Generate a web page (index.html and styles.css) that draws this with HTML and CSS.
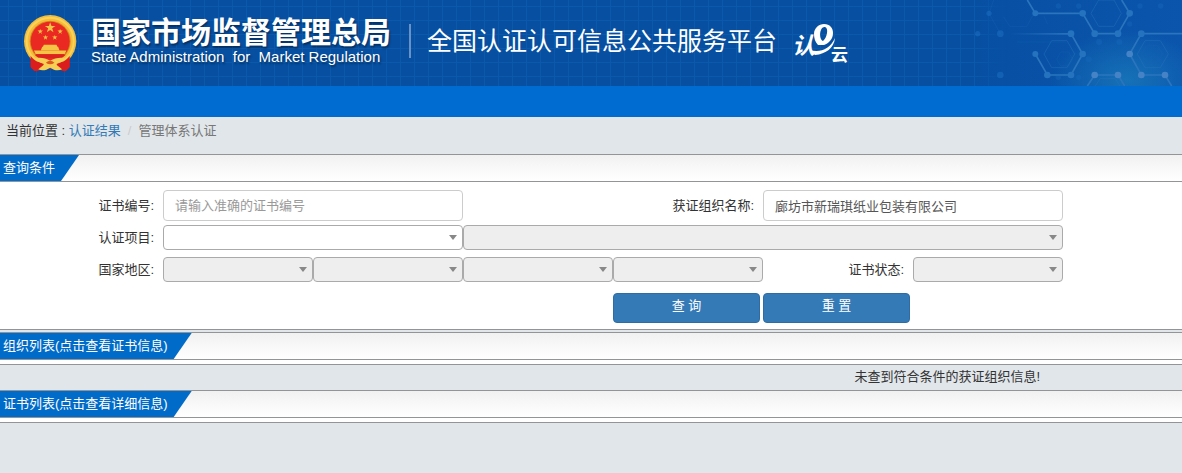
FILE: index.html
```html
<!DOCTYPE html>
<html lang="zh-CN">
<head>
    <meta charset="UTF-8">
    <meta name="viewport" content="width=device-width, initial-scale=1.0">
    <title>全国认证认可信息公共服务平台</title>
    <link rel="stylesheet" href="styles.css">
</head>
<body>
    <header class="header">
        <svg class="header-bg" viewBox="0 0 966 258" aria-hidden="true">
            <defs>
                <radialGradient id="glow">
                    <stop offset="0" stop-color="#2390c4" stop-opacity="0.5"/>
                    <stop offset="1" stop-color="#2390c4" stop-opacity="0"/>
                </radialGradient>
                <linearGradient id="fade">
                    <stop offset="0" stop-color="#0750a4" stop-opacity="0"/>
                    <stop offset="1" stop-color="#0750a4"/>
                </linearGradient>
                <linearGradient id="base">
                    <stop offset="0" stop-color="#0750a4"/>
                    <stop offset="1" stop-color="#0b55ad"/>
                </linearGradient>
                <linearGradient id="line" gradientUnits="userSpaceOnUse" x1="450" y1="0" x2="640" y2="0">
                    <stop offset="0" stop-color="#2a75bd" stop-opacity="0"/>
                    <stop offset="1" stop-color="#2a75bd"/>
                </linearGradient>
            </defs>
            <rect x="340" width="100" height="258" fill="url(#fade)"/>
            <rect x="439" width="527" height="258" fill="url(#base)"/>
            <ellipse cx="800" cy="240" rx="230" ry="150" fill="url(#glow)"/>
            <g fill="none" stroke="#2a74bd" stroke-width="3" opacity="0.45">
                <path d="M552 162l23-40h46l23 40-23 41h-46zM832 162l23-40h46l24 40-24 41h-46zM693 40l23-40h46l22 40-22 39h-46z"/>
                <path d="M706 258l14-22h46l14 22"/>
            </g>
            <g fill="none" stroke="#1a64b4" stroke-width="2" opacity="0.5">
                <path d="M590 178l12-22h24l12 22-12 20h-24zM470 126h150M562 72l-10-24M845 162l15-26h32l15 26-15 27h-32z"/>
                <path d="M387 40l14-40M387 40l34 61M430 50l20 30h50l22-40"/>
            </g>
            <g fill="none" stroke="#2a75bd" stroke-width="5">
                <path d="M502 0l24 40h142l36 61h70l35-61-24-40M633 101l35 61-35 63h-71l-36-63M966 101H844l-35 61 35 63h71l20 33M682 258l22-33h70l20 33"/>
                <path d="M450 101h183v1H450z" stroke="url(#line)" stroke-width="4"/>
            </g>
            <g fill="#2572bf">
                <circle cx="526" cy="40" r="9"/><circle cx="668" cy="40" r="10"/>
                <circle cx="809" cy="40" r="10"/><circle cx="633" cy="101" r="10"/>
                <circle cx="704" cy="101" r="10"/><circle cx="774" cy="101" r="10"/>
                <circle cx="844" cy="101" r="10"/><circle cx="526" cy="162" r="9"/>
                <circle cx="668" cy="162" r="10"/><circle cx="562" cy="225" r="10"/>
                <circle cx="633" cy="225" r="10"/>
            </g>
            <g fill="#4683c6">
                <circle cx="809" cy="162" r="10"/><circle cx="704" cy="225" r="10"/>
                <circle cx="774" cy="225" r="10"/><circle cx="844" cy="225" r="10"/>
                <circle cx="915" cy="225" r="10"/>
            </g>
            <g fill="#1a6cc0" opacity="0.6">
                <circle cx="387" cy="40" r="8"/><circle cx="421" cy="101" r="10"/>
                <circle cx="353" cy="101" r="8"/><circle cx="421" cy="225" r="10"/>
            </g>
            <g fill="#1a6cc0" opacity="0.35">
                <circle cx="686" cy="178" r="9"/><circle cx="717" cy="126" r="9"/>
                <circle cx="778" cy="126" r="9"/><circle cx="809" cy="72" r="8"/>
                <circle cx="840" cy="18" r="8"/><circle cx="902" cy="18" r="8"/>
                <circle cx="656" cy="232" r="8"/><circle cx="595" cy="232" r="8"/>
                <circle cx="595" cy="18" r="8"/><circle cx="656" cy="18" r="8"/>
            </g>
        </svg>

        <svg class="emblem" viewBox="0 0 160 172" role="img" aria-label="国徽">
            <path d="M20 122h118v34l-18 14-22-8H60l-22 8-18-14z" fill="#cf1a1c"/>
            <circle cx="79" cy="79" r="79" fill="#f3bd38"/>
            <circle cx="79" cy="79" r="71" fill="none" stroke="#fbd15a" stroke-width="6"/>
            <circle cx="79" cy="79" r="62" fill="#d98a20"/>
            <circle cx="79" cy="79" r="59" fill="#ea2a22"/>
            <g fill="#f6c445">
                <path d="M79 22l4 11h12l-10 7 4 12-10-7-10 7 4-12-10-7h12z"/>
                <path d="M49 42l2 5h6l-5 4 2 6-5-4-5 4 2-6-5-4h6zM109 42l2 5h6l-5 4 2 6-5-4-5 4 2-6-5-4h6zM65 60l2 5h6l-5 4 2 6-5-4-5 4 2-6-5-4h6zM93 60l2 5h6l-5 4 2 6-5-4-5 4 2-6-5-4h6z"/>
                <path d="M60 90h38l3 6H57zM55 96h48l4 10H51zM30 107h98l-5 11H35z"/>
            </g>
            <path d="M32 120h94l-12 10H44z" fill="#d9231f"/>
            <path d="M20 124c12 16 26 20 40 22l-4 18-24 6-12-12zM138 124c-12 16-26 20-40 22l4 18 24 6 12-12z" fill="#dc1d1d"/>
            <path d="M34 130c16-3 32 0 45 8 13-8 29-11 45-8-9 12-20 18-29 18l20 16c-12 5-24 3-36-5-12 8-24 10-36 5l20-16c-9 0-20-6-29-18z" fill="#f8cf55"/>
            <path d="M66 144q13-12 26 0-13 10-26 0z" fill="#dc5a1d"/>
        </svg>

        <div class="org">
            <div class="org-cn">国家市场监督管理总局</div>
            <div class="org-en">State Administration&nbsp; for&nbsp; Market Regulation</div>
        </div>
        <h1 class="platform">全国认证认可信息公共服务平台</h1>

        <svg class="cloud-logo" viewBox="0 0 56 42" role="img" aria-label="认e云">
            <text class="logo-ren" x="-1" y="31">认</text>
            <text class="logo-yun" x="38" y="38">云</text>
            <path d="M17 27c10 3 20-1 25-12-1 10-9 16-20 17z"/>
            <path fill-rule="evenodd" d="M25 22c-3-3-4-7-4-11C21 5 26 1 31 1c6 0 9 4 9 9 0 6-4 10-9 12zM32 4c-5-1-7 11-2 14 4-3 6-13 2-14z"/>
        </svg>
    </header>

    <nav class="navbar"></nav>

    <div class="breadcrumb">
        当前位置 : <a href="#">认证结果</a><span class="separator">/</span><span class="current">管理体系认证</span>
    </div>

    <section class="panel">
        <div class="panel-head"><h2 class="tab">查询条件</h2></div>
        <form class="search-form">
            <div class="form-row">
                <label for="cert-no">证书编号:</label>
                <input class="span-2" type="text" id="cert-no" placeholder="请输入准确的证书编号">
                <label class="org-label" for="org-name">获证组织名称:</label>
                <input class="span-2" type="text" id="org-name" value="廊坊市新瑞琪纸业包装有限公司">
            </div>
            <div class="form-row">
                <label for="project">认证项目:</label>
                <div class="select span-2"><select id="project"><option></option></select></div>
                <div class="select span-4"><select aria-label="认证项目小类" disabled><option></option></select></div>
            </div>
            <div class="form-row region-row">
                <label for="country">国家地区:</label>
                <div class="select"><select id="country" disabled><option></option></select></div>
                <div class="select"><select aria-label="省" disabled><option></option></select></div>
                <div class="select"><select aria-label="市" disabled><option></option></select></div>
                <div class="select"><select aria-label="区县" disabled><option></option></select></div>
                <label for="status">证书状态:</label>
                <div class="select"><select id="status" disabled><option></option></select></div>
            </div>
            <div class="form-row button-row">
                <button class="btn btn-first" type="button">查 询</button>
                <button class="btn" type="reset">重 置</button>
            </div>
        </form>
    </section>

    <section class="panel">
        <div class="panel-head"><h2 class="tab">组织列表(点击查看证书信息)</h2></div>
        <div class="panel-line"></div>
    </section>
    <p class="message">未查到符合条件的获证组织信息!</p>

    <section class="panel">
        <div class="panel-head"><h2 class="tab">证书列表(点击查看详细信息)</h2></div>
        <div class="panel-line"></div>
    </section>
</body>
</html>
```
FILE: styles.css
```css
* {
    box-sizing: border-box;
}
body {
    margin: 0;
    font-family: "Liberation Sans", "Noto Sans CJK SC", sans-serif;
    font-size: 13px;
    line-height: 20px;
    color: #333;
    background-color: #e1e6ea;
}

/* header */
.header {
    position: relative;
    display: flex;
    align-items: center;
    height: 86px;
    padding: 0 0 4px 24px;
    color: #fff;
    background-color: #064fa1;
    background-image:
        repeating-linear-gradient(to right, transparent 0 8px, #0c59ab 8px 9px, transparent 9px 14px),
        repeating-linear-gradient(to bottom, transparent 0 6px, #0c59ab 6px 7px, transparent 7px 14px);
}
.header-bg {
    position: absolute;
    top: 0;
    right: 0;
    width: 322px;
    height: 86px;
}
.emblem {
    flex: none;
    width: 53px;
    height: 57px;
    margin-top: 4px;
}
.org {
    position: relative;
    margin-left: 14px;
    padding-right: 18px;
    white-space: nowrap;
    text-shadow: 1px 2px 2px rgba(0, 0, 0, 0.4);
}
.org-cn {
    font-size: 30px;
    font-weight: bold;
    line-height: 32px;
}
.org-en {
    font-size: 15px;
    line-height: 16px;
}
.platform {
    position: relative;
    margin: 0;
    padding-left: 16px;
    border-left: 2px solid #6993c6;
    font-size: 25px;
    font-weight: normal;
    line-height: 34px;
    white-space: nowrap;
}
.cloud-logo {
    position: relative;
    flex: none;
    width: 56px;
    height: 42px;
    margin: 6px 0 0 16px;
    fill: #fff;
}
.logo-ren {
    font-size: 23px;
    font-weight: bold;
    font-style: italic;
}
.logo-yun {
    font-size: 17px;
    font-weight: bold;
}
.navbar {
    height: 31px;
    background-color: #006bd0;
}

.breadcrumb {
    height: 37px;
    padding: 4px 6px;
}
.breadcrumb a {
    color: #337ab7;
    text-decoration: none;
}
.separator {
    padding: 0 7px;
    color: #ccc;
}
.current {
    color: #777;
}

/* panels */
.panel {
    margin-bottom: 2px;
    background-color: #fff;
    border-bottom: 1px solid #939496;
}
.panel-head {
    display: flex;
    height: 28px;
    border-top: 1px solid #939496;
    border-bottom: 1px solid #939496;
    background: linear-gradient(#f1f1f1, #fff);
}
.panel-line {
    height: 4px;
}
.tab {
    margin: 0;
    padding: 0 24px 0 3px;
    font-size: 13px;
    font-weight: normal;
    line-height: 26px;
    color: #fff;
    background-color: #006bc8;
    clip-path: polygon(0 0, 100% 0, calc(100% - 18px) 100%, 0 100%);
}
.message {
    height: 23px;
    margin: 0;
    padding-right: 12%;
    text-align: right;
}

/* search form */
.search-form {
    padding: 8px 0 6px;
}
.form-row {
    display: grid;
    grid-template-columns: 163fr repeat(6, 150fr) 119fr;
    align-items: center;
    margin-bottom: 4px;
}
.form-row label {
    padding-right: 9px;
    text-align: right;
}
.form-row .org-label {
    grid-column: span 2;
}
.span-2 {
    grid-column: span 2;
}
.span-4 {
    grid-column: span 4;
}
.region-row {
    margin-top: 7px;
}
.button-row {
    margin-top: 11px;
    margin-bottom: 0;
}
input {
    width: 100%;
    height: 31px;
    padding: 0 11px;
    border: 1px solid #ccc;
    border-radius: 4px;
    font: inherit;
    color: #555;
    background-color: #fff;
}
input::placeholder {
    color: #999;
}
.select {
    position: relative;
}
.select::after {
    content: "";
    position: absolute;
    top: 10px;
    right: 6px;
    border: 4px solid transparent;
    border-top: 5px solid #888;
    border-bottom: 0;
    pointer-events: none;
}
select {
    display: block;
    width: 100%;
    height: 25px;
    padding: 0 20px 0 8px;
    border: 1px solid #aaa;
    border-radius: 4px;
    font: inherit;
    background-color: #fff;
    appearance: none;
}
select:disabled {
    background-color: #eee;
    opacity: 1;
}
.btn {
    height: 30px;
    margin-right: 3px;
    padding: 0 12px 4px;
    border: 1px solid #2e6da4;
    border-radius: 4px;
    font: inherit;
    color: #fff;
    background-color: #337ab7;
    cursor: pointer;
}
.btn-first {
    grid-column-start: 5;
}
```
